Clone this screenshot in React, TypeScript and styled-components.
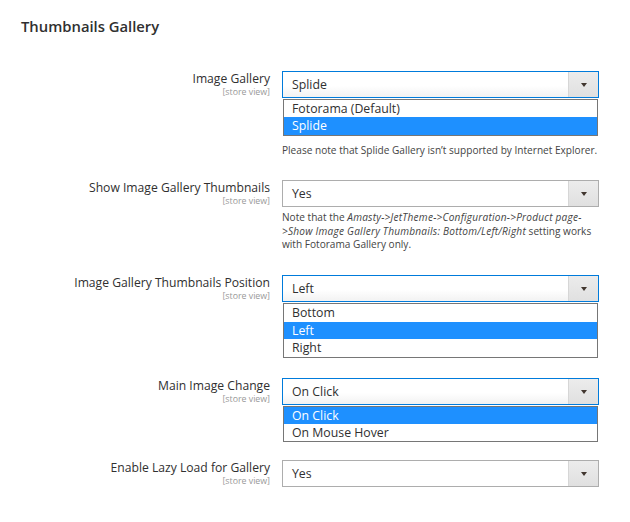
import styled, { createGlobalStyle } from "styled-components";

const GlobalStyle = createGlobalStyle`
  body {
    margin: 0;
    background: #fff;
    font-family: "Open Sans", "Liberation Sans", sans-serif;
    color: #303030;
  }
`;

const Page = styled.div`
  padding: 17px 0 0 21px;
`;

const Heading = styled.h2`
  margin: 0 0 35px;
  font-size: 14.8px;
  font-weight: 600;
  line-height: 19px;
  color: #303030;
`;

const Row = styled.div<{ after: number }>`
  display: grid;
  grid-template-columns: 249px 317px;
  column-gap: 12px;
  margin-bottom: ${({ after }) => after}px;
`;

const LabelCell = styled.div`
  display: flex;
  flex-direction: column;
  align-items: flex-end;
  text-align: right;
`;

const LabelText = styled.span`
  font-size: 12.15px;
  line-height: 15px;
  color: #303030;
`;

const Scope = styled.span`
  font-size: 8.8px;
  line-height: 12px;
  color: #999;
`;

const Control = styled.div`
  display: flex;
  flex-direction: column;
`;

const SelectBox = styled.div<{ focused: boolean }>`
  position: relative;
  box-sizing: border-box;
  height: 27px;
  display: flex;
  align-items: center;
  padding-left: 9px;
  font-size: 12.3px;
  color: #303030;
  border: 1px solid ${({ focused }) => (focused ? "#007bdb" : "#adadad")};
  background: ${({ focused }) =>
    focused ? "linear-gradient(#fff 55%, #f2f2f2)" : "#fff"};
`;

const ArrowBox = styled.div`
  position: absolute;
  top: 0;
  right: 0;
  bottom: 0;
  width: 29px;
  display: flex;
  align-items: center;
  justify-content: center;
  background: linear-gradient(#ececec, #e0e0e0);
  border-left: 1px solid #d6d6d6;

  &::after {
    content: "";
    border-left: 3.5px solid transparent;
    border-right: 3.5px solid transparent;
    border-top: 4px solid #41362f;
    margin-top: 1px;
  }
`;

const OptionList = styled.div`
  box-sizing: border-box;
  margin: 1px 1px 0;
  border: 1px solid #767676;
  background: #fff;
`;

const Option = styled.div<{ selected: boolean }>`
  height: 17.4px;
  line-height: 17.4px;
  padding-left: 8px;
  font-size: 12.3px;
  color: ${({ selected }) => (selected ? "#fff" : "#303030")};
  background: ${({ selected }) => (selected ? "#1e90ff" : "transparent")};
`;

const Note = styled.div<{ top: number }>`
  margin-top: ${({ top }) => top}px;
  font-size: 10.1px;
  line-height: 13.4px;
  color: #444;
  white-space: nowrap;

  em {
    font-style: italic;
    letter-spacing: 0.23px;
  }
`;

type Field = {
  label: string;
  value: string;
  focused: boolean;
  options?: string[];
  note?: React.ReactNode;
  after: number;
};

const fields: Field[] = [
  {
    label: "Image Gallery",
    value: "Splide",
    focused: true,
    options: ["Fotorama (Default)", "Splide"],
    note: "Please note that Splide Gallery isn’t supported by Internet Explorer.",
    after: 23,
  },
  {
    label: "Show Image Gallery Thumbnails",
    value: "Yes",
    focused: false,
    note: (
      <>
        Note that the <em>Amasty-&gt;JetTheme-&gt;Configuration-&gt;Product page-</em>
        <br />
        <em>&gt;Show Image Gallery Thumbnails: Bottom/Left/Right</em> setting works
        <br />
        with Fotorama Gallery only.
      </>
    ),
    after: 24,
  },
  {
    label: "Image Gallery Thumbnails Position",
    value: "Left",
    focused: true,
    options: ["Bottom", "Left", "Right"],
    after: 20,
  },
  {
    label: "Main Image Change",
    value: "On Click",
    focused: true,
    options: ["On Click", "On Mouse Hover"],
    after: 18,
  },
  {
    label: "Enable Lazy Load for Gallery",
    value: "Yes",
    focused: false,
    after: 0,
  },
];

export default function App() {
  return (
    <Page>
      <GlobalStyle />
      <Heading>Thumbnails Gallery</Heading>
      {fields.map((f) => (
        <Row key={f.label} after={f.after}>
          <LabelCell>
            <LabelText>{f.label}</LabelText>
            <Scope>[store view]</Scope>
          </LabelCell>
          <Control>
            <SelectBox focused={f.focused}>
              {f.value}
              <ArrowBox />
            </SelectBox>
            {f.options && (
              <OptionList>
                {f.options.map((o) => (
                  <Option key={o} selected={o === f.value}>
                    {o}
                  </Option>
                ))}
              </OptionList>
            )}
            {f.note && <Note top={f.options ? 8 : 4}>{f.note}</Note>}
          </Control>
        </Row>
      ))}
    </Page>
  );
}
